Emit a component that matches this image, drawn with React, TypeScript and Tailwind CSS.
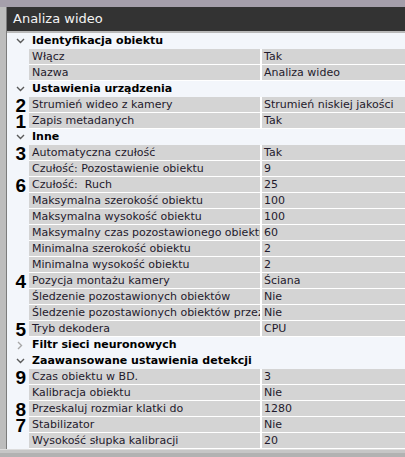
type Row =
  | { kind: "group"; label: string; open: boolean }
  | { kind: "item"; label: string; value: string; num?: string };

const rows: Row[] = [
  { kind: "group", label: "Identyfikacja obiektu", open: true },
  { kind: "item", label: "Włącz", value: "Tak" },
  { kind: "item", label: "Nazwa", value: "Analiza wideo" },
  { kind: "group", label: "Ustawienia urządzenia", open: true },
  { kind: "item", label: "Strumień wideo z kamery", value: "Strumień niskiej jakości", num: "2" },
  { kind: "item", label: "Zapis metadanych", value: "Tak", num: "1" },
  { kind: "group", label: "Inne", open: true },
  { kind: "item", label: "Automatyczna czułość", value: "Tak", num: "3" },
  { kind: "item", label: "Czułość: Pozostawienie obiektu", value: "9" },
  { kind: "item", label: "Czułość:  Ruch", value: "25", num: "6" },
  { kind: "item", label: "Maksymalna szerokość obiektu", value: "100" },
  { kind: "item", label: "Maksymalna wysokość obiektu", value: "100" },
  { kind: "item", label: "Maksymalny czas pozostawionego obiektu", value: "60" },
  { kind: "item", label: "Minimalna szerokość obiektu", value: "2" },
  { kind: "item", label: "Minimalna wysokość obiektu", value: "2" },
  { kind: "item", label: "Pozycja montażu kamery", value: "Ściana", num: "4" },
  { kind: "item", label: "Śledzenie pozostawionych obiektów", value: "Nie" },
  { kind: "item", label: "Śledzenie pozostawionych obiektów przez", value: "Nie" },
  { kind: "item", label: "Tryb dekodera", value: "CPU", num: "5" },
  { kind: "group", label: "Filtr sieci neuronowych", open: false },
  { kind: "group", label: "Zaawansowane ustawienia detekcji", open: true },
  { kind: "item", label: "Czas obiektu w BD.", value: "3", num: "9" },
  { kind: "item", label: "Kalibracja obiektu", value: "Nie" },
  { kind: "item", label: "Przeskaluj rozmiar klatki do", value: "1280", num: "8" },
  { kind: "item", label: "Stabilizator", value: "Nie", num: "7" },
  { kind: "item", label: "Wysokość słupka kalibracji", value: "20" },
];

const Chevron = ({ open }: { open: boolean }) =>
  open ? (
    <svg width="9" height="6" viewBox="0 0 9 6" className="text-[#5a5a5a]">
      <path d="M1 1 L4.5 4.5 L8 1" fill="none" stroke="currentColor" strokeWidth="1.4" />
    </svg>
  ) : (
    <svg width="6" height="9" viewBox="0 0 6 9" className="text-[#a8a8a8]">
      <path d="M1 1 L4.5 4.5 L1 8" fill="none" stroke="currentColor" strokeWidth="1.4" />
    </svg>
  );

export default function App() {
  return (
    <div className="w-[405px] h-[457px] overflow-hidden bg-[#a59fab] font-['DejaVu_Sans',sans-serif] text-[11px]">
      <div className="h-[7px]" />
      <div className="flex h-[442px]">
        <div className="w-[6px] bg-[#bdbdbd] border-r border-[#7c7c7c] box-content" />
        <div className="flex-1 flex flex-col min-w-0 bg-[#f3f6fb]">
          <div className="h-[24px] bg-[#333333] text-[#f4f4f4] text-[13px] flex items-center pl-[6px]">
            Analiza wideo
          </div>
          <div className="h-[2px] bg-[#b9b9b9]" />
          {rows.map((r, i) =>
            r.kind === "group" ? (
              <div key={i} className="h-4 flex items-center">
                <div className="w-[25px] flex justify-center pl-[1px]">
                  <Chevron open={r.open} />
                </div>
                <span className="font-bold text-black whitespace-nowrap">{r.label}</span>
              </div>
            ) : (
              <div key={i} className="h-4 flex">
                <div className="w-[22px] flex items-center justify-end pr-[3px] font-['Liberation_Sans',sans-serif] font-bold text-[19px] leading-none text-black">
                  {r.num}
                </div>
                <div className="w-[231px] bg-[#d4d4d4] border-b border-white pl-[3px] text-[#1f1a2c] whitespace-pre overflow-hidden leading-[15px]">
                  {r.label}
                </div>
                <div className="w-[2px] bg-white" />
                <div className="flex-1 bg-[#d4d4d4] border-b border-white pl-[2px] text-[#1f1a2c] whitespace-pre overflow-hidden leading-[15px]">
                  {r.value}
                </div>
              </div>
            )
          )}
        </div>
      </div>
      <div className="h-[1px] bg-[#dcdcdc]" />
      <div className="h-[3px] bg-[#c6c6c6]" />
      <div className="h-[4px] bg-[#b2b2b2]" />
    </div>
  );
}
